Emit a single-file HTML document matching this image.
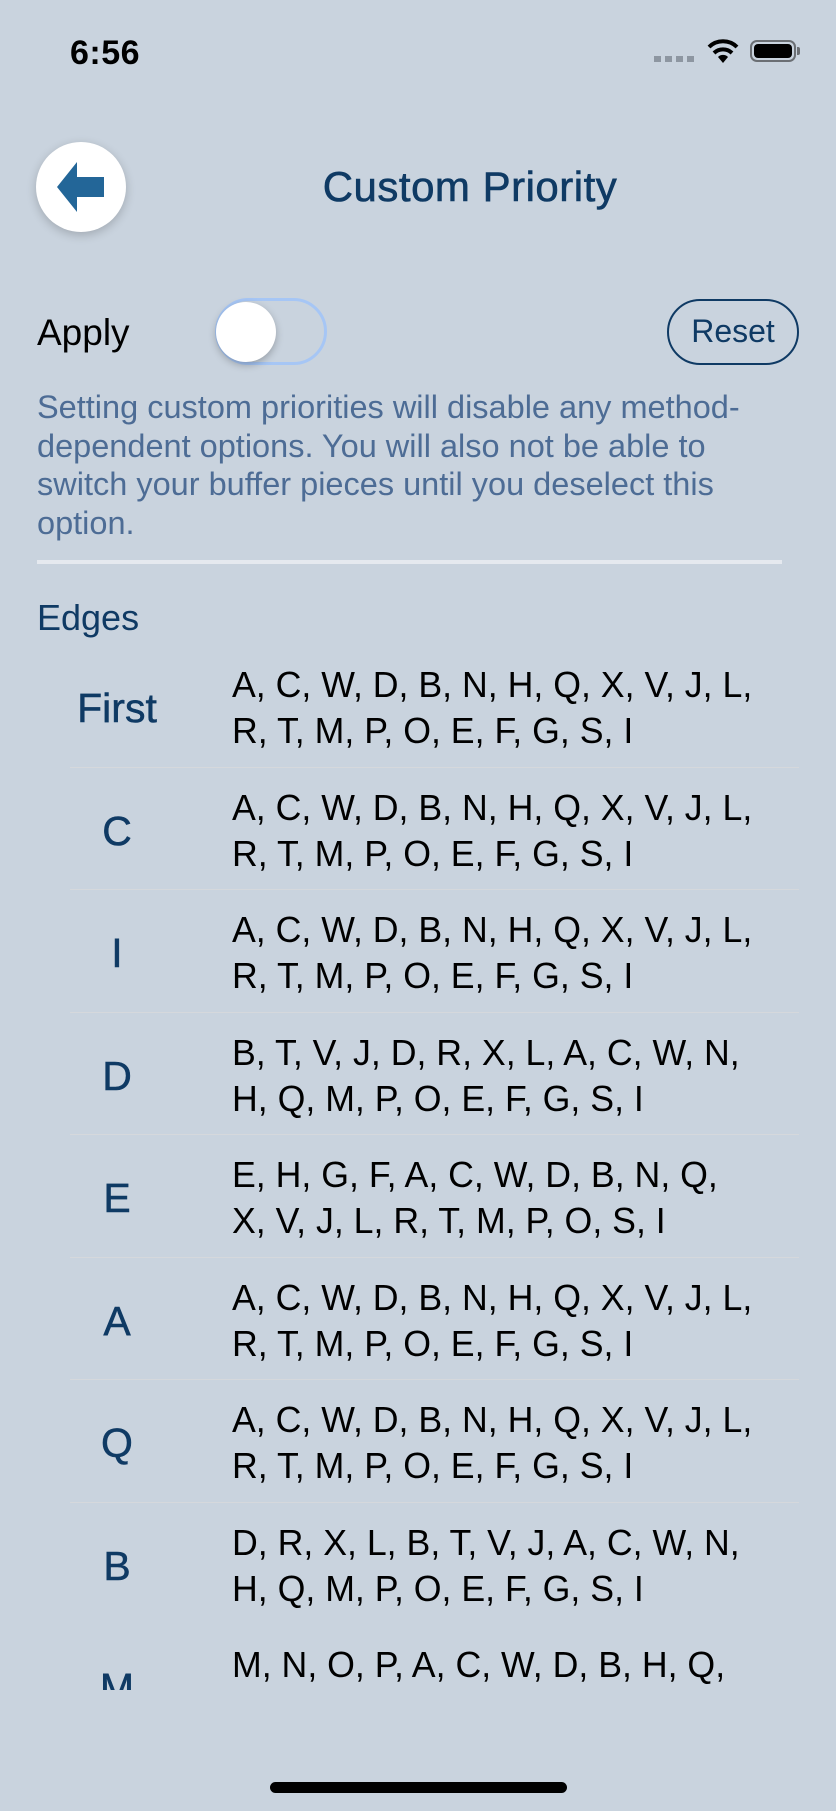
<!DOCTYPE html>
<html><head><meta charset="utf-8"><style>
*{margin:0;padding:0;box-sizing:border-box}
body{width:836px;height:1811px;background:#c9d3de;font-family:"Liberation Sans",sans-serif;position:relative;overflow:hidden}
.abs{position:absolute}
.time{left:70px;top:34px;font-size:34px;font-weight:bold;color:#000;letter-spacing:0.5px}
.back{left:36px;top:142px;width:90px;height:90px;border-radius:50%;background:#fff;box-shadow:0 3px 10px rgba(0,0,0,0.2)}
.title{left:0;width:940px;text-align:center;top:163px;font-size:42px;color:#0f3a64;letter-spacing:0.5px;-webkit-text-stroke:0.6px #0f3a64}
.apply{left:37px;top:312px;font-size:37px;color:#000}
.toggle{left:215px;top:298px;width:112px;height:67px;border-radius:34px;border:3px solid #a6c6f5;background:#c9d3de}
.knob{left:216px;top:302px;width:60px;height:60px;border-radius:50%;background:#fff;box-shadow:0 3px 8px rgba(0,0,0,0.25)}
.reset{left:667px;top:299px;width:132px;height:66px;border-radius:33px;border:2.5px solid #0f3a64;color:#0f3a64;font-size:32px;text-align:center;line-height:61px}
.desc{left:37px;top:388px;width:790px;font-size:32.5px;line-height:38.5px;color:#4d6c95;white-space:nowrap}
.divider{left:37px;top:560px;width:745px;height:4px;background:#e5e9ef}
.edges{left:37px;top:597px;font-size:36px;color:#0f3a64}
.list{left:0;top:645px;width:836px;height:1045px;overflow:hidden}
.row{position:relative;height:122.5px}
.row .sep{position:absolute;left:70px;right:37px;bottom:0;height:1px;background:#d5d8dc}
.lbl{position:absolute;left:57px;width:120px;text-align:center;top:40px;font-size:41px;color:#0f3a64;-webkit-text-stroke:0.5px #0f3a64}
.val{position:absolute;left:232px;top:17px;font-size:35.7px;line-height:46px;color:#000;white-space:nowrap}
.home{left:270px;top:1782px;width:297px;height:11px;border-radius:6px;background:#000}
</style></head><body>
<div class="abs time">6:56</div>
<div class="abs" style="left:654px;top:56px;width:40px;height:6px;background:repeating-linear-gradient(90deg,#8d96a1 0 7px,transparent 7px 11px)"></div>
<svg class="abs" style="left:706px;top:38px" width="34" height="26" viewBox="0 0 34 26"><path d="M17 25 L12 19 A7 7 0 0 1 22 19 Z" fill="#000"/><path d="M8 15 A13 13 0 0 1 26 15" stroke="#000" stroke-width="4" fill="none"/><path d="M3 9 A20 20 0 0 1 31 9" stroke="#000" stroke-width="4" fill="none"/></svg>
<div class="abs" style="left:750px;top:40px;width:46px;height:22px;border:2px solid #6b6f74;border-radius:7px;padding:2px"><div style="width:100%;height:100%;background:#000;border-radius:4px"></div></div>
<div class="abs" style="left:797px;top:47px;width:3px;height:8px;background:#6b6f74;border-radius:0 2px 2px 0"></div>
<div class="abs back"><svg width="90" height="90" viewBox="0 0 90 90"><path d="M21 45 L41 20 L41 35 L68 35 L68 55 L41 55 L41 70 Z" fill="#236698"/></svg></div>
<div class="abs title">Custom Priority</div>
<div class="abs apply">Apply</div>
<div class="abs toggle"></div>
<div class="abs knob"></div>
<div class="abs reset">Reset</div>
<div class="abs desc">Setting custom priorities will disable any method-<br>dependent options. You will also not be able to<br>switch your buffer pieces until you deselect this<br>option.</div>
<div class="abs divider"></div>
<div class="abs edges">Edges</div>
<div class="abs list">
<div class="row"><div class="lbl">First</div><div class="val">A, C, W, D, B, N, H, Q, X, V, J, L,<br>R, T, M, P, O, E, F, G, S, I</div><div class="sep"></div></div>
<div class="row"><div class="lbl">C</div><div class="val">A, C, W, D, B, N, H, Q, X, V, J, L,<br>R, T, M, P, O, E, F, G, S, I</div><div class="sep"></div></div>
<div class="row"><div class="lbl">I</div><div class="val">A, C, W, D, B, N, H, Q, X, V, J, L,<br>R, T, M, P, O, E, F, G, S, I</div><div class="sep"></div></div>
<div class="row"><div class="lbl">D</div><div class="val">B, T, V, J, D, R, X, L, A, C, W, N,<br>H, Q, M, P, O, E, F, G, S, I</div><div class="sep"></div></div>
<div class="row"><div class="lbl">E</div><div class="val">E, H, G, F, A, C, W, D, B, N, Q,<br>X, V, J, L, R, T, M, P, O, S, I</div><div class="sep"></div></div>
<div class="row"><div class="lbl">A</div><div class="val">A, C, W, D, B, N, H, Q, X, V, J, L,<br>R, T, M, P, O, E, F, G, S, I</div><div class="sep"></div></div>
<div class="row"><div class="lbl">Q</div><div class="val">A, C, W, D, B, N, H, Q, X, V, J, L,<br>R, T, M, P, O, E, F, G, S, I</div><div class="sep"></div></div>
<div class="row"><div class="lbl">B</div><div class="val">D, R, X, L, B, T, V, J, A, C, W, N,<br>H, Q, M, P, O, E, F, G, S, I</div></div>
<div class="row"><div class="lbl">M</div><div class="val">M, N, O, P, A, C, W, D, B, H, Q,<br>R, T, X, V, J, L, E, F, G, S, I</div></div>
</div>
<div class="abs home"></div>
</body></html>
